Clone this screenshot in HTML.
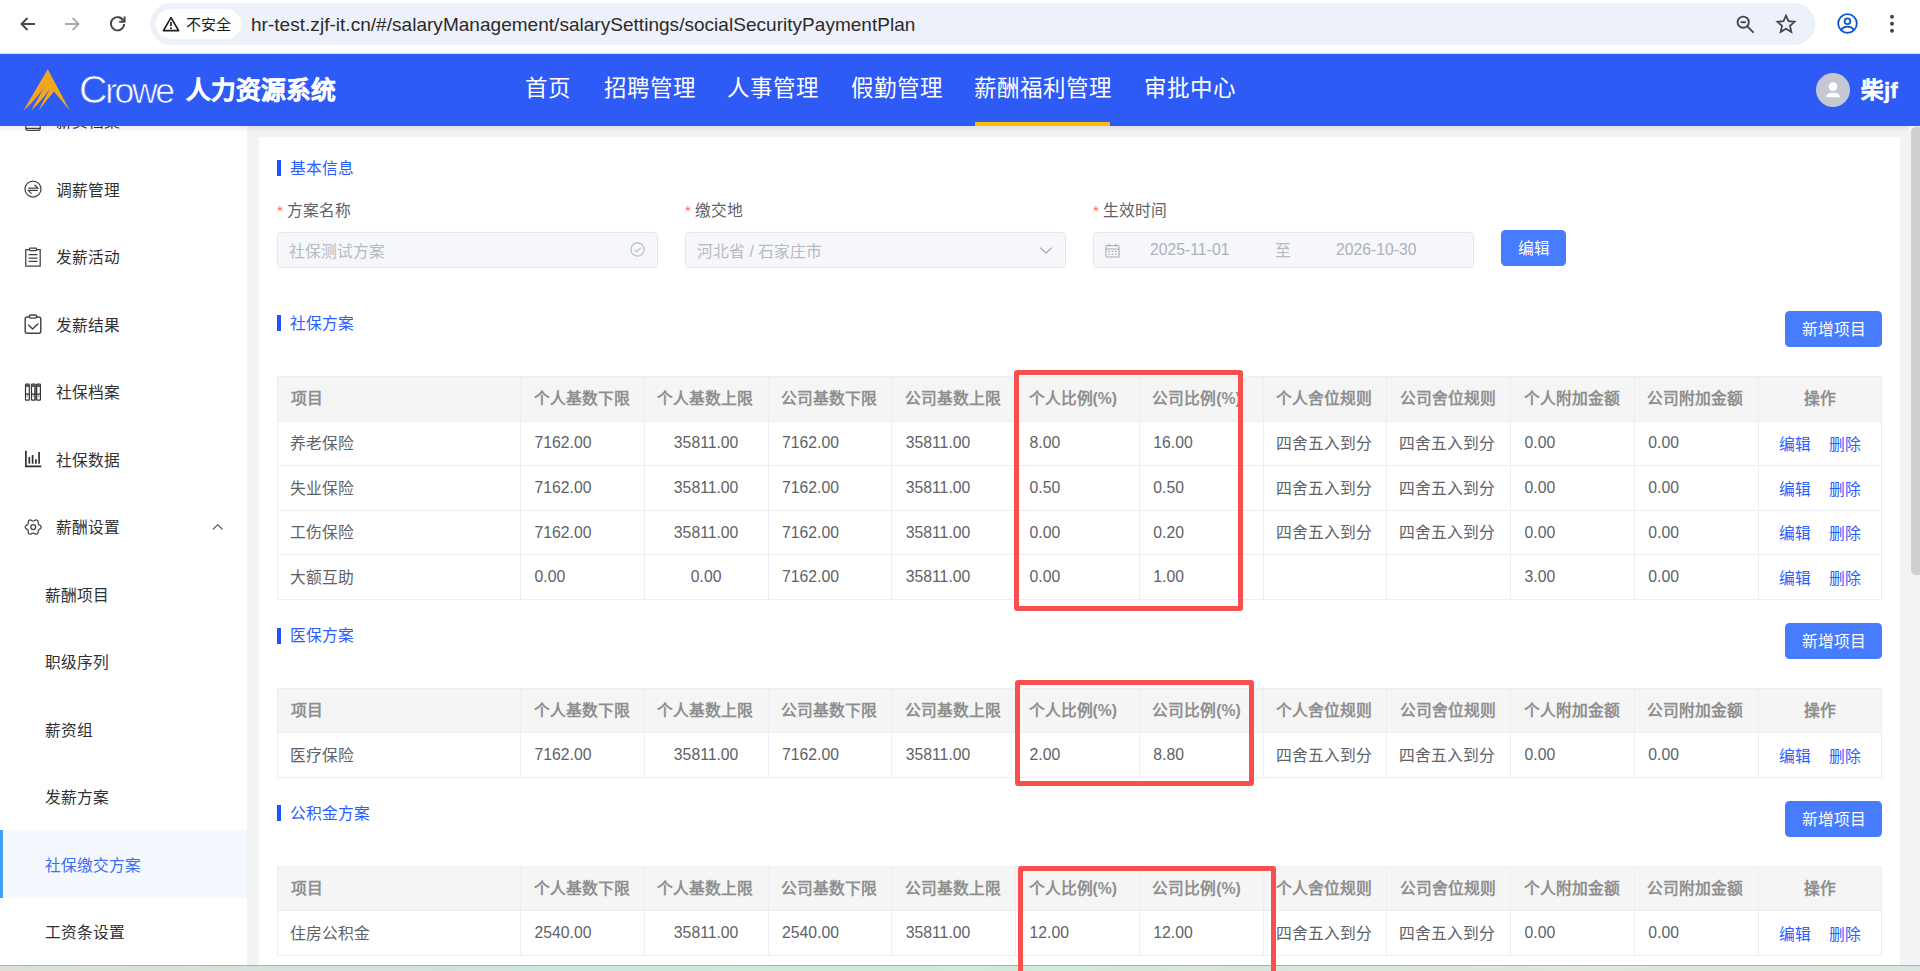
<!DOCTYPE html>
<html lang="zh-CN">
<head>
<meta charset="utf-8">
<title>社保缴交方案</title>
<style>
*{box-sizing:border-box;margin:0;padding:0}
html,body{width:1920px;height:971px;overflow:hidden;background:#fff;font-family:"Liberation Sans",sans-serif;}
body{position:relative;color:#303133}
.abs{position:absolute}
/* browser chrome */
#chrome{position:absolute;left:0;top:0;width:1920px;height:54px;background:#fff;border-bottom:1px solid #dcdcdc}
#pill{position:absolute;left:150px;top:3px;width:1665px;height:42px;border-radius:21px;background:#edf1fa}
#chip{position:absolute;left:156px;top:9px;width:85px;height:30px;border-radius:15px;background:#fff}
#chip span{position:absolute;left:30px;top:0;line-height:31px;font-size:15px;color:#1f1f1f;white-space:nowrap}
#url{position:absolute;left:251px;top:5px;line-height:40px;font-size:19px;color:#2a2a2a;white-space:nowrap;letter-spacing:0.03px}
/* header */
#hdr{position:absolute;left:0;top:54px;width:1920px;height:72px;background:#2e5af6;color:#fff}
#crowe{position:absolute;left:79px;top:13px;font-size:35.5px;line-height:44px;letter-spacing:-2.4px;-webkit-text-stroke:0.7px #2e5af6;color:#fff;white-space:nowrap}
#sys{position:absolute;left:186px;top:15px;-webkit-text-stroke:0.4px #fff;font-size:24.75px;line-height:44px;font-weight:bold;white-space:nowrap}
.nav{position:absolute;top:0;height:72px;line-height:70px;margin-left:-1px;font-size:22.5px;white-space:nowrap;color:#fff}
#uline{position:absolute;left:975px;top:67.5px;width:135px;height:4.5px;background:#fbbc05}
#avatar{position:absolute;left:1816px;top:19px;width:34px;height:34px;border-radius:50%;background:#c5c8d1;overflow:hidden}
#uname{position:absolute;left:1861px;top:14.5px;-webkit-text-stroke:0.3px #fff;font-size:22.5px;line-height:44px;font-weight:bold;white-space:nowrap}
/* sidebar */
#side{position:absolute;left:0;top:126px;width:247px;height:839px;background:#fff;overflow:hidden}
.mi{position:absolute;left:0;width:247px;height:67.5px;line-height:72px;font-size:15.75px;color:#303133;white-space:nowrap}
.mi span{position:absolute;left:56px;top:0}
.mi.sub span{left:45px}
.mi svg{position:absolute;left:24px;top:24.75px;width:18px;height:18px}
.mi.act{background:#f4f8ff;color:#3a6df0}
.mi.act:before{content:"";position:absolute;left:0;top:0;width:3px;height:100%;background:#409eff}
/* main */
#main{position:absolute;left:247px;top:126px;width:1673px;height:839px;background:#f2f3f5}
#card{position:absolute;left:259px;top:137px;width:1641px;height:828px;background:#fff}
#sbar{position:absolute;left:1908px;top:126px;width:12px;height:839px;background:#f2f3f5}
#thumb{position:absolute;left:1911px;top:127px;width:9px;height:448px;border-radius:5px 0 0 5px;background:#cfcfd1}
.st{position:absolute;left:277px;height:16px;font-size:15.75px;color:#2a5cff;white-space:nowrap}
.st i{position:absolute;left:0;top:0;width:4px;height:16px;background:#1e54ff}
.st span{position:absolute;left:13px;top:-3.2px;line-height:24px}
.lbl{position:absolute;margin-top:1.5px;font-size:15.75px;line-height:24px;color:#606266;white-space:nowrap}
.lbl b{color:#f56c6c;font-weight:normal;margin-right:4px;font-size:15px}
.inp{position:absolute;top:232px;width:381px;height:36px;border:1px solid #e4e7ed;border-radius:4px;background:#f5f7fa;color:#b6bac2;font-size:15.75px;line-height:37px;white-space:nowrap}
.btn{position:absolute;background:#487cfe;color:#fff;border-radius:4.5px;font-size:15.75px;text-align:center;white-space:nowrap}
table{position:absolute;left:277px;width:1605px;border-collapse:collapse;table-layout:fixed;font-size:15.75px}
td,th{height:44.6px;line-height:42px;border:1px solid #ebeef5;padding:0 0 0 13.5px;text-align:left;white-space:nowrap;overflow:hidden;font-weight:normal;color:#606266}
th{background:#f5f5f5;color:#8f8f8f;font-weight:bold;line-height:42px;padding:0 0 0 12.5px}
.t2 th{padding-top:0.7px}
td.z{line-height:42px;padding:1.4px 0 0 12px}
td.c,th.c{text-align:center;padding-left:0}
td a{color:#2d5cff;text-decoration:none;position:relative;top:1px}
.red{position:absolute;border:5px solid #f94f4f;border-radius:3px}
#strip{position:absolute;left:0;top:965px;width:1920px;height:6px;background:linear-gradient(90deg,#dce0d6 0%,#cfe3dc 23%,#d2ead9 50%,#d6e7dc 68%,#e0e6da 82%,#d8e6de 100%);border-top:1px solid #a9b3ae}
#shadow{position:absolute;left:0;top:126px;width:1920px;height:7px;background:linear-gradient(rgba(0,0,0,0.07),rgba(0,0,0,0))}
</style>
</head>
<body>
<div id="chrome">
<div id="pill"></div>
<div id="chip"><span>不安全</span></div>
<svg class="abs" style="left:162px;top:16px" width="18" height="16" viewBox="0 0 18 16"><path d="M9 1.6L16.6 14.6H1.4Z" fill="none" stroke="#1f1f1f" stroke-width="1.7" stroke-linejoin="round"/><path d="M9 6v4.2" stroke="#1f1f1f" stroke-width="1.7"/><circle cx="9" cy="12.3" r="0.95" fill="#1f1f1f"/></svg>

<svg class="abs" style="left:18px;top:14px" width="20" height="20" viewBox="0 0 20 20"><path d="M17 10H4M9.5 4L3.5 10l6 6" fill="none" stroke="#474747" stroke-width="1.9"/></svg>
<svg class="abs" style="left:62px;top:14px" width="20" height="20" viewBox="0 0 20 20"><path d="M3 10h13M10.5 4l6 6-6 6" fill="none" stroke="#ababab" stroke-width="1.9"/></svg>
<svg class="abs" style="left:107px;top:13px" width="21" height="21" viewBox="0 0 21 21"><path d="M16.6 8.2A6.6 6.6 0 1 0 17.1 11" fill="none" stroke="#474747" stroke-width="1.9"/><path d="M17.6 3.4v5.4h-5.4" fill="none" stroke="#474747" stroke-width="1.9"/></svg>


<svg class="abs" style="left:1735px;top:14px" width="21" height="21" viewBox="0 0 21 21"><circle cx="8.2" cy="8.2" r="5.6" fill="none" stroke="#474747" stroke-width="1.9"/><path d="M12.4 12.4L18.6 18.6" stroke="#474747" stroke-width="1.9"/><path d="M5.6 8.2h5.2" stroke="#474747" stroke-width="1.9"/></svg>
<svg class="abs" style="left:1775px;top:13px" width="22" height="22" viewBox="0 0 22 22"><path d="M11 2.6l2.5 5.6 6.1.6-4.6 4.1 1.3 6-5.3-3.1-5.3 3.1 1.3-6L2.4 8.8l6.1-.6Z" fill="none" stroke="#474747" stroke-width="1.8" stroke-linejoin="miter"/></svg>
<svg class="abs" style="left:1837px;top:13px" width="21" height="21" viewBox="0 0 21 21"><circle cx="10.5" cy="10.5" r="9.3" fill="none" stroke="#0b57d0" stroke-width="1.8"/><circle cx="10.5" cy="8.3" r="2.9" fill="none" stroke="#0b57d0" stroke-width="1.8"/><path d="M4.2 16.6c1.6-2.2 3.8-3 6.3-3s4.7.8 6.3 3" fill="none" stroke="#0b57d0" stroke-width="1.8"/></svg>
<svg class="abs" style="left:1889px;top:13px" width="6" height="22" viewBox="0 0 6 22"><circle cx="3" cy="3.7" r="2" fill="#474747"/><circle cx="3" cy="10.7" r="2" fill="#474747"/><circle cx="3" cy="17.7" r="2" fill="#474747"/></svg>

<div id="url">hr-test.zjf-it.cn/#/salaryManagement/salarySettings/socialSecurityPaymentPlan</div>
</div>
<div id="main"></div>
<div id="card"></div>
<div class="st" style="top:160px"><i></i><span>基本信息</span></div>
<div class="lbl" style="left:277px;top:197px"><b>*</b>方案名称</div><div class="lbl" style="left:685px;top:197px"><b>*</b>缴交地</div><div class="lbl" style="left:1093px;top:197px"><b>*</b>生效时间</div>
<div class="inp" style="left:277px"><span style="margin-left:11px">社保测试方案</span><svg class="abs" style="left:352.3px;top:8.8px" width="15" height="15" viewBox="0 0 15 15"><circle cx="7.5" cy="7.5" r="6.6" fill="none" stroke="#b4b8c0" stroke-width="1.1"/><path d="M4.4 7.6l2.2 2.2 4-4" fill="none" stroke="#b4b8c0" stroke-width="1.1"/></svg></div>
<div class="inp" style="left:685px"><span style="margin-left:11px">河北省 / 石家庄市</span><svg class="abs" style="left:353px;top:12.7px" width="14" height="9" viewBox="0 0 14 9"><path d="M1.2 1.6L7 7.2l5.8-5.6" fill="none" stroke="#a4a7ad" stroke-width="1.2"/></svg></div>
<div class="inp" style="left:1093px"><svg class="abs" style="left:11px;top:9.5px" width="15" height="15" viewBox="0 0 15 15"><rect x="1" y="2.5" width="13" height="11.5" rx="1" fill="none" stroke="#a8abb3" stroke-width="1.1"/><path d="M1 6h13M4.2 0.8v3M10.8 0.8v3" stroke="#a8abb3" stroke-width="1.1"/><path d="M3.5 8.4h1.6M6.7 8.4h1.6M9.9 8.4h1.6M3.5 11.2h1.6M6.7 11.2h1.6M9.9 11.2h1.6" stroke="#a8abb3" stroke-width="1.2"/></svg><span class="abs" style="left:56px;top:-2.5px;color:#adb1b9">2025-11-01</span><span class="abs" style="left:181px;top:-1px">至</span><span class="abs" style="left:242px;top:-2.5px;color:#adb1b9">2026-10-30</span></div>
<div class="btn" style="left:1501px;top:230px;width:65px;height:36px;line-height:37px">编辑</div>
<div class="st" style="top:315px"><i></i><span>社保方案</span></div>
<div class="btn" style="left:1785px;top:311px;width:97px;height:36px;line-height:37px">新增项目</div>
<table style="top:376px"><colgroup><col style="width:243px"><col style="width:123.75px"><col style="width:123.75px"><col style="width:123.75px"><col style="width:123.75px"><col style="width:123.75px"><col style="width:123.75px"><col style="width:123.75px"><col style="width:123.75px"><col style="width:123.75px"><col style="width:123.75px"><col></colgroup>
<tr><th>项目</th><th>个人基数下限</th><th>个人基数上限</th><th>公司基数下限</th><th>公司基数上限</th><th>个人比例(%)</th><th>公司比例(%)</th><th>个人舍位规则</th><th>公司舍位规则</th><th>个人附加金额</th><th>公司附加金额</th><th class="c">操作</th></tr>
<tr><td class="z">养老保险</td><td>7162.00</td><td class="c">35811.00</td><td>7162.00</td><td>35811.00</td><td>8.00</td><td>16.00</td><td class="z">四舍五入到分</td><td class="z">四舍五入到分</td><td>0.00</td><td>0.00</td><td class="c z"><a>编辑</a><a style="margin-left:18px">删除</a></td></tr>
<tr><td class="z">失业保险</td><td>7162.00</td><td class="c">35811.00</td><td>7162.00</td><td>35811.00</td><td>0.50</td><td>0.50</td><td class="z">四舍五入到分</td><td class="z">四舍五入到分</td><td>0.00</td><td>0.00</td><td class="c z"><a>编辑</a><a style="margin-left:18px">删除</a></td></tr>
<tr><td class="z">工伤保险</td><td>7162.00</td><td class="c">35811.00</td><td>7162.00</td><td>35811.00</td><td>0.00</td><td>0.20</td><td class="z">四舍五入到分</td><td class="z">四舍五入到分</td><td>0.00</td><td>0.00</td><td class="c z"><a>编辑</a><a style="margin-left:18px">删除</a></td></tr>
<tr><td class="z">大额互助</td><td>0.00</td><td class="c">0.00</td><td>7162.00</td><td>35811.00</td><td>0.00</td><td>1.00</td><td class="z"></td><td class="z"></td><td>3.00</td><td>0.00</td><td class="c z"><a>编辑</a><a style="margin-left:18px">删除</a></td></tr>
</table>
<div class="st" style="top:628px"><i></i><span style="top:-4.2px">医保方案</span></div>
<div class="btn" style="left:1785px;top:623px;width:97px;height:36px;line-height:37px">新增项目</div>
<table class="t2" style="top:687.7px"><colgroup><col style="width:243px"><col style="width:123.75px"><col style="width:123.75px"><col style="width:123.75px"><col style="width:123.75px"><col style="width:123.75px"><col style="width:123.75px"><col style="width:123.75px"><col style="width:123.75px"><col style="width:123.75px"><col style="width:123.75px"><col></colgroup>
<tr><th>项目</th><th>个人基数下限</th><th>个人基数上限</th><th>公司基数下限</th><th>公司基数上限</th><th>个人比例(%)</th><th>公司比例(%)</th><th>个人舍位规则</th><th>公司舍位规则</th><th>个人附加金额</th><th>公司附加金额</th><th class="c">操作</th></tr>
<tr><td class="z">医疗保险</td><td>7162.00</td><td class="c">35811.00</td><td>7162.00</td><td>35811.00</td><td>2.00</td><td>8.80</td><td class="z">四舍五入到分</td><td class="z">四舍五入到分</td><td>0.00</td><td>0.00</td><td class="c z"><a>编辑</a><a style="margin-left:18px">删除</a></td></tr>
</table>
<div class="st" style="top:805px"><i></i><span>公积金方案</span></div>
<div class="btn" style="left:1785px;top:801px;width:97px;height:36px;line-height:37px">新增项目</div>
<table class="t2" style="top:865.7px"><colgroup><col style="width:243px"><col style="width:123.75px"><col style="width:123.75px"><col style="width:123.75px"><col style="width:123.75px"><col style="width:123.75px"><col style="width:123.75px"><col style="width:123.75px"><col style="width:123.75px"><col style="width:123.75px"><col style="width:123.75px"><col></colgroup>
<tr><th>项目</th><th>个人基数下限</th><th>个人基数上限</th><th>公司基数下限</th><th>公司基数上限</th><th>个人比例(%)</th><th>公司比例(%)</th><th>个人舍位规则</th><th>公司舍位规则</th><th>个人附加金额</th><th>公司附加金额</th><th class="c">操作</th></tr>
<tr><td class="z">住房公积金</td><td>2540.00</td><td class="c">35811.00</td><td>2540.00</td><td>35811.00</td><td>12.00</td><td>12.00</td><td class="z">四舍五入到分</td><td class="z">四舍五入到分</td><td>0.00</td><td>0.00</td><td class="c z"><a>编辑</a><a style="margin-left:18px">删除</a></td></tr>
</table>

<div id="side">
<div class="mi " style="top:-39.25px"><svg viewBox="0 0 18 18" style="overflow:visible"><rect x="1.8" y="1.5" width="14.4" height="16.9" rx="1.6" fill="none" stroke="#404346" stroke-width="1.25"/><path d="M1.8 16.4h14.4" fill="none" stroke="#404346" stroke-width="1.25"/></svg><span style="top:-0.5px">薪资档案</span></div>
<div class="mi " style="top:29.25px"><svg viewBox="0 0 18 18"><circle cx="9" cy="9" r="8" fill="none" stroke="#404346" stroke-width="1.25"/><path d="M4.3 8h9.6l-3.4-3.3M13.9 10.4H4.3l3.3 3.2" fill="none" stroke="#404346" stroke-width="1.25"/></svg><span>调薪管理</span></div>
<div class="mi " style="top:96.75px"><svg viewBox="0 0 18 18" style="overflow:visible"><path d="M5.5 1.5H1.8v16.7h14.4V1.5h-3.7" fill="none" stroke="#404346" stroke-width="1.25"/><rect x="5.5" y="0" width="7" height="2.5" rx="0.5" fill="none" stroke="#404346" stroke-width="1.25"/><path d="M4.6 6.6h8.8M4.6 10h8.8M4.6 13.4h8.8" fill="none" stroke="#404346" stroke-width="1.25"/></svg><span style="top:-0.5px">发薪活动</span></div>
<div class="mi " style="top:164.25px"><svg viewBox="0 0 18 18" style="overflow:visible"><g fill="none" stroke="#404346" stroke-width="1.45"><path d="M5.3 2H3.2a2 2 0 0 0-2 2v12.3a2 2 0 0 0 2 2h11.6a2 2 0 0 0 2-2V4a2 2 0 0 0-2-2h-2.1"/><rect x="5.3" y="0" width="7.4" height="3.1" rx="1.5"/><path d="M4.3 9.7l4.3 4.3 5.6-5.6"/></g></svg><span>发薪结果</span></div>
<div class="mi " style="top:231.75px"><svg viewBox="0 0 18 18" style="overflow:visible"><rect x="11.2" y="1" width="1.4" height="16.4" fill="#6b6e72"/><rect x="1.5" y="1.2" width="3.8" height="15.9" rx="0.6" fill="#fff" stroke="#303133" stroke-width="1.2"/><rect x="7.5" y="1.2" width="3.4" height="15.9" rx="0.6" fill="#fff" stroke="#303133" stroke-width="1.2"/><rect x="12.7" y="1.2" width="3.7" height="15.9" rx="0.6" fill="#fff" stroke="#303133" stroke-width="1.2"/><path d="M1.5 2.9h3.8M7.5 2.9h3.4M12.7 2.9h3.7" stroke="#55585c" stroke-width="2.4"/><path d="M1 11.1h4.8M7 11.1h4.4M12.2 11.1h4.7" stroke="#303133" stroke-width="1.1"/><circle cx="3.4" cy="13.1" r="0.55" fill="#303133"/><circle cx="9.2" cy="13.1" r="0.55" fill="#303133"/><circle cx="14.5" cy="13.1" r="0.55" fill="#303133"/></svg><span style="top:-0.5px">社保档案</span></div>
<div class="mi " style="top:299.25px"><svg viewBox="0 0 18 18" style="overflow:visible"><path d="M1.9 0.8v15.6h15.4" fill="none" stroke="#2f3134" stroke-width="1.7"/><path d="M5.3 7.1v6.6M8.6 5v8.7M11.9 9.2v4.5M15.1 1.9v11.8" stroke="#2f3134" stroke-width="1.7"/></svg><span>社保数据</span></div>
<div class="mi " style="top:366.75px"><svg viewBox="0 0 18 18"><path d="M17.15 9.10L17.03 9.78L16.67 10.42L15.96 10.91L15.23 11.29L14.77 11.70L14.44 12.12L14.23 12.62L14.11 13.22L14.15 14.05L14.08 14.91L13.71 15.54L13.18 15.98L12.52 16.22L11.79 16.23L11.01 15.86L10.31 15.42L9.74 15.22L9.20 15.15L8.66 15.22L8.09 15.42L7.39 15.86L6.61 16.23L5.88 16.22L5.23 15.98L4.69 15.54L4.32 14.91L4.25 14.05L4.29 13.22L4.17 12.62L3.96 12.13L3.63 11.70L3.17 11.29L2.44 10.91L1.73 10.42L1.37 9.78L1.25 9.10L1.37 8.42L1.73 7.78L2.44 7.29L3.17 6.91L3.63 6.50L3.96 6.07L4.17 5.58L4.29 4.98L4.25 4.15L4.32 3.29L4.69 2.66L5.22 2.22L5.88 1.98L6.61 1.97L7.39 2.34L8.09 2.78L8.66 2.98L9.20 3.05L9.74 2.98L10.31 2.78L11.01 2.34L11.79 1.97L12.52 1.98L13.17 2.22L13.71 2.66L14.08 3.29L14.15 4.15L14.11 4.98L14.23 5.58L14.44 6.08L14.77 6.50L15.23 6.91L15.96 7.29L16.67 7.78L17.03 8.42Z" fill="none" stroke="#404346" stroke-width="1.25" stroke-linejoin="round"/><circle cx="9.2" cy="9.1" r="2.45" fill="none" stroke="#404346" stroke-width="1.25"/></svg><span style="top:-0.5px">薪酬设置</span></div>
<div class="mi sub" style="top:434.25px"><span>薪酬项目</span></div>
<div class="mi sub" style="top:501.75px"><span style="top:-0.5px">职级序列</span></div>
<div class="mi sub" style="top:569.25px"><span>薪资组</span></div>
<div class="mi sub" style="top:636.75px"><span style="top:-0.5px">发薪方案</span></div>
<div class="mi sub act" style="top:704.25px"><span>社保缴交方案</span></div>
<div class="mi sub" style="top:771.75px"><span style="top:-0.5px">工资条设置</span></div>
<svg class="abs" style="left:212.3px;top:396.6px" width="11.4" height="7.6" viewBox="0 0 12 8"><path d="M1 6.8L6 1.8l5 5" fill="none" stroke="#404346" stroke-width="1.2"/></svg>
</div>
<div id="shadow"></div>
<div id="hdr">
<svg class="abs" style="left:15px;top:6px" width="90" height="60" viewBox="0 0 1456 971"><path d="M530 148L890 820 630 510 375 820 575 445Q462 631 260 820L520 355Q402 586 135 820Z" fill="#f4a71d"/></svg>
<div id="crowe"><span style="font-size:39.5px">C</span>rowe</div>
<div id="sys">人力资源系统</div>
<div class="nav" style="left:526px">首页</div>
<div class="nav" style="left:604.5px">招聘管理</div>
<div class="nav" style="left:728px">人事管理</div>
<div class="nav" style="left:852px">假勤管理</div>
<div class="nav" style="left:975px">薪酬福利管理</div>
<div class="nav" style="left:1144.5px">审批中心</div>
<div id="uline"></div>
<div id="avatar"><svg width="34" height="34" viewBox="0 0 34 34"><circle cx="17" cy="13.6" r="4.3" fill="#fff"/><path d="M10 24.3c0-3.2 3.4-4.6 7-4.6s7 1.4 7 4.6Z" fill="#fff"/></svg></div>
<div id="uname">柴jf</div>
</div>
<div id="sbar"></div><div id="thumb"></div>
<div id="strip"></div>
<div class="red" style="left:1014px;top:370px;width:229px;height:241px"></div>
<div class="red" style="left:1015px;top:680px;width:238.5px;height:105.5px"></div>
<div class="red" style="left:1018px;top:866px;width:257.5px;height:120px"></div>
</body>
</html>
